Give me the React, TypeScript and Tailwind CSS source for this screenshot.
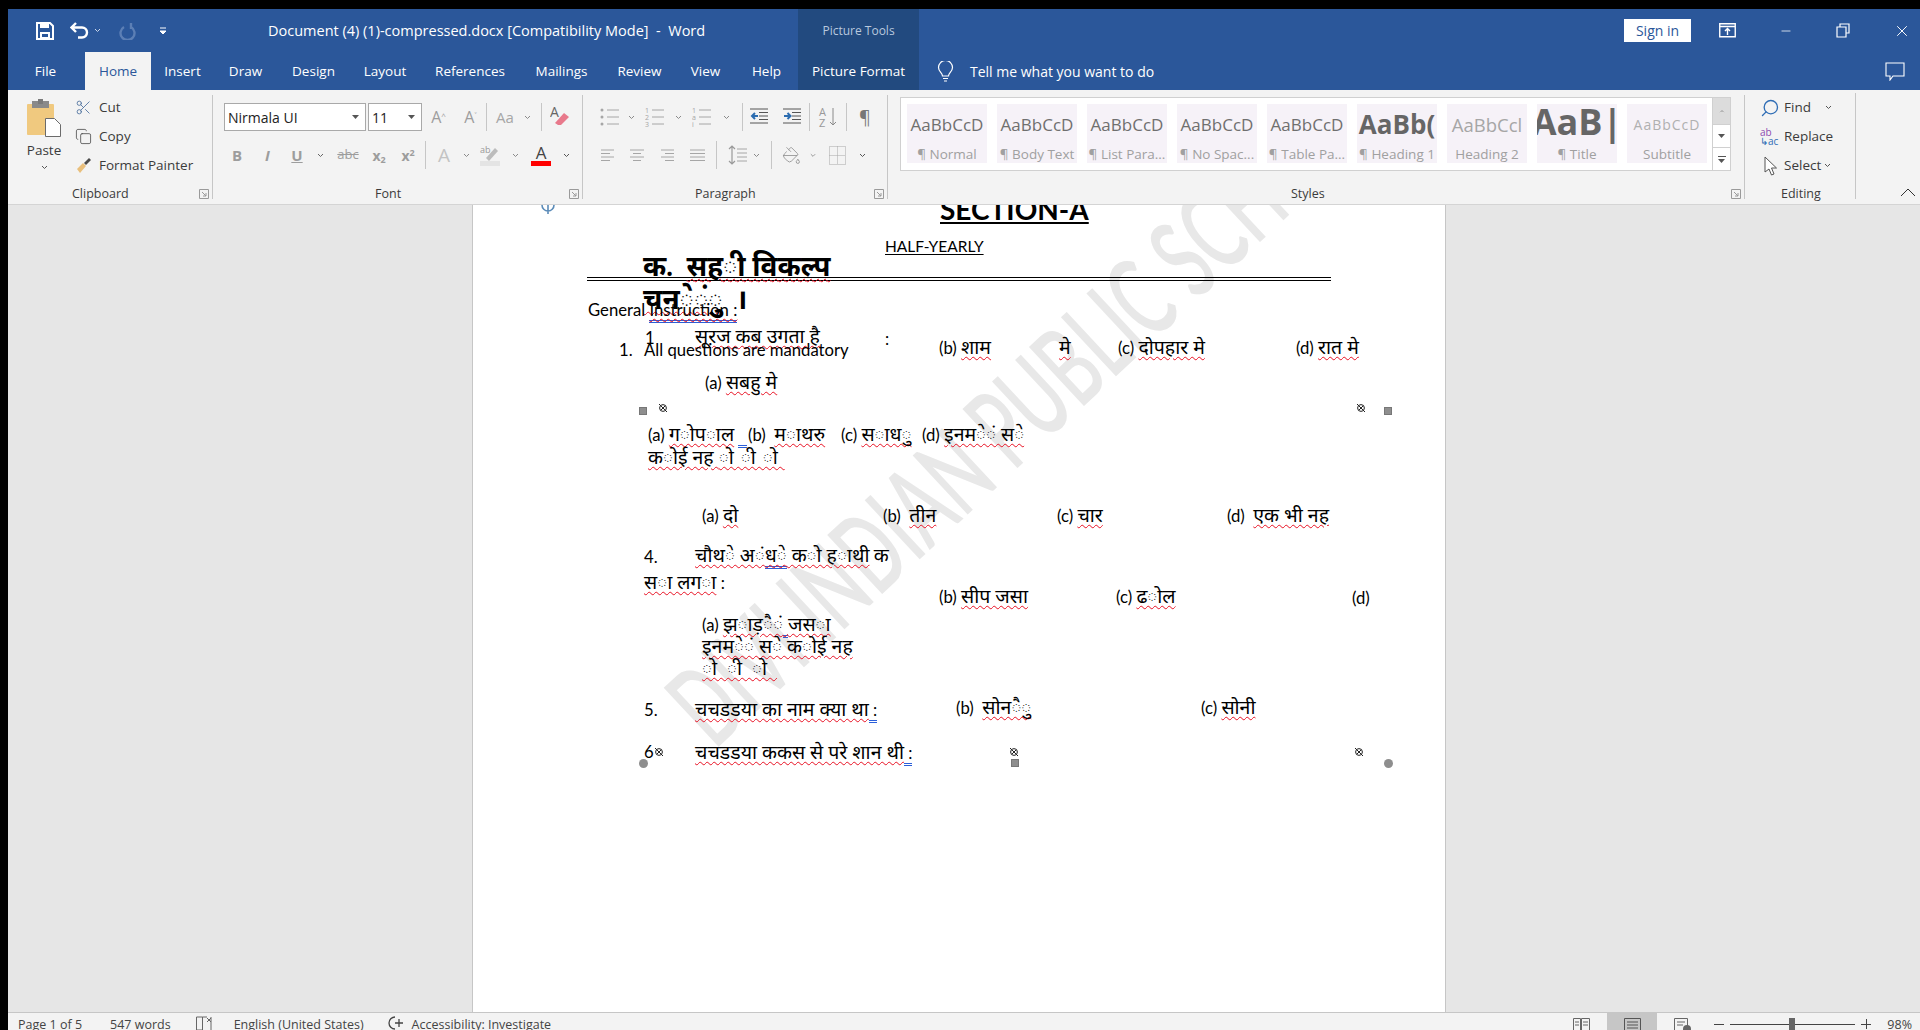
import React from "react";
import { Scissors, Copy, Search, X, Minus, ChevronUp, PaintBucket } from "lucide-react";

const Chev = ({ c = "text-[#8a8a8a]" }: { c?: string }) => (
  <svg width="7" height="5" viewBox="0 0 7 5" className={c}><path d="M1 1l2.5 2.5L6 1" fill="none" stroke="currentColor" strokeWidth="1" /></svg>
);
const Tri = () => <svg width="7" height="4" viewBox="0 0 7 4"><path d="M0 0h7L3.5 4z" fill="#555" /></svg>;
const Launcher = () => (
  <svg width="10" height="10" viewBox="0 0 10 10" className="absolute right-[3px] bottom-0 text-[#9a9a9a]"><path d="M.5.5h9v9h-9z M3 3l4 4 M7 4v3H4" fill="none" stroke="currentColor" strokeWidth="1" /></svg>
);
const Cell = ({ w, children }: { w: string; children?: React.ReactNode }) => (
  <div className={`${w} h-[26px] flex items-center justify-center shrink-0`}>{children}</div>
);
const VSep = () => <div className="w-px h-[28px] bg-[#c6c6c6] shrink-0" />;

const Lines = ({ kind }: { kind: string }) => {
  const rows = [2, 5.5, 9, 12.5];
  const spans: Record<string, [number, number][]> = {
    left: [[0, 13], [0, 9], [0, 13], [0, 9]],
    center: [[0, 14], [3, 11], [0, 14], [3, 11]],
    right: [[0, 13], [4, 13], [0, 13], [4, 13]],
    just: [[0, 15], [0, 15], [0, 15], [0, 15]],
  };
  return (
    <svg width="15" height="15" viewBox="0 0 15 15">
      {rows.map((y, i) => <line key={i} x1={spans[kind][i][0]} x2={spans[kind][i][1]} y1={y} y2={y} stroke="#a6a6a6" strokeWidth="1" />)}
    </svg>
  );
};
const ListIcon = ({ label }: { label: string[] }) => (
  <svg width="20" height="20" viewBox="0 0 20 20">
    {[3, 10, 17].map((y, i) => (
      <g key={y}>
        {label[i] === "." ? <circle cx="2" cy={y} r="1.5" fill="#a6a6a6" /> : <text x="0" y={y + 3} fontSize="7" fill="#a6a6a6">{label[i]}</text>}
        <line x1="7" x2="19" y1={y} y2={y} stroke="#a6a6a6" />
      </g>
    ))}
  </svg>
);
const Indent = ({ flip }: { flip?: boolean }) => (
  <svg width="19" height="18" viewBox="0 0 19 18">
    {[1, 4.5, 8, 11.5, 15].map(y => <line key={y} x1={y === 1 || y === 15 ? 0 : 9} x2="18" y1={y} y2={y} stroke="#555" />)}
    <path d={flip ? "M1 8h6M4.5 5l3 3-3 3" : "M8 8H2M5 5L2 8l3 3"} fill="none" stroke="#2b6cb0" strokeWidth="2" />
  </svg>
);
const Anchor = ({ c }: { c: string }) => (
  <svg width="10" height="10" viewBox="0 0 10 10" className={`absolute ${c}`}>
    <circle cx="5" cy="5" r="3.4" fill="none" stroke="#222" strokeWidth="1" />
    <path d="M1 1l8 8M3 7l4-4" stroke="#222" strokeWidth="1" />
  </svg>
);

const StyleItem = ({ preview, label, p = "text-[17px] text-[#6f6f6f]" }: { preview: string; label: string; p?: string }) => (
  <div className="w-[80px] h-[59px] bg-[#f6f2f8] overflow-hidden shrink-0 flex flex-col items-center">
    <div className={`h-[41px] flex items-center justify-center whitespace-nowrap w-[80px] overflow-hidden ${p}`}>{preview}</div>
    <div className="text-[13.5px] text-[#a0a0a0] whitespace-nowrap leading-[18px]">{label}</div>
  </div>
);

const Tab = ({ w, children, c = "text-white" }: { w: string; children: React.ReactNode; c?: string }) => (
  <div className={`${w} h-[38px] flex items-center justify-center text-[13.5px] shrink-0 ${c}`}>{children}</div>
);

const W = ({ children }: { children: React.ReactNode }) => (
  <span className="text-[19.5px] underline decoration-wavy decoration-[#e81123] decoration-1 underline-offset-2">{children}</span>
);
const H = ({ children }: { children: React.ReactNode }) => (
  <span className="underline decoration-wavy decoration-[#e81123] decoration-1 underline-offset-2">{children}</span>
);
const B = ({ children }: { children: React.ReactNode }) => (
  <span className="border-b-[3px] border-double border-[#2b5fd9]">{children}</span>
);
const T = ({ c, children }: { c: string; children: React.ReactNode }) => (
  <div className={`absolute whitespace-pre leading-[24px] text-[16.7px] text-black ${c}`}>{children}</div>
);

export default function App() {
  return (
    <div className="w-[1920px] h-[1030px] bg-black pt-[9px] pl-[8px] overflow-hidden flex flex-col font-['Open_Sans','Noto_Sans',sans-serif]">
      {/* title row */}
      <div className="h-[43px] bg-[#2b579a] flex text-white shrink-0">
        <div className="w-[790px] flex items-center shrink-0">
          <svg width="18" height="18" viewBox="0 0 18 18" className="ml-[28px]">
            <path d="M1 1h13l3 3v13H1z" fill="none" stroke="#fff" strokeWidth="2" />
            <rect x="4" y="1" width="9" height="5" fill="#fff" /><rect x="4" y="10" width="10" height="7" fill="#fff" /><rect x="6" y="12" width="6" height="3" fill="#2b579a" />
          </svg>
          <svg width="19" height="17" viewBox="0 0 19 17" className="ml-[16px]"><path d="M6 1L1.5 5.5 6 10M2 5.5h10a5 5 0 0 1 0 10H8" fill="none" stroke="#fff" strokeWidth="2.4" /></svg>
          <span className="ml-[5px]"><Chev c="text-[#c9d6ea]" /></span>
          <svg width="17" height="18" viewBox="0 0 17 18" className="ml-[18px]"><path d="M12 1v6M12 5a7 7 0 1 1-7 0" fill="none" stroke="#5c7fb5" strokeWidth="2.4" /></svg>
          <svg width="6" height="8" viewBox="0 0 6 8" className="ml-[24px]"><path d="M0 1h6M0 4h6l-3 3z" stroke="#fff" fill="#fff" /></svg>
          <div className="ml-[102px] text-[14.5px] whitespace-pre">Document (4) (1)-compressed.docx [Compatibility Mode]  -  Word</div>
        </div>
        <div className="w-[121px] bg-[#224a7f] flex items-center justify-center text-[12px] text-[#b9c8de] shrink-0">Picture Tools</div>
        <div className="flex-1 flex items-center">
          <div className="ml-[705px] w-[67px] h-[23px] bg-white text-[#2b579a] text-[14px] flex items-center justify-center shrink-0">Sign in</div>
          <svg width="17" height="15" viewBox="0 0 17 15" className="ml-[28px]"><path d="M.75.75h15.5v13H.75zM1 3.5h15M8.5 12V6M6 8l2.5-2.5L11 8" fill="none" stroke="#fff" strokeWidth="1.4" /></svg>
          <Minus size={14} strokeWidth={1.3} className="ml-[43px]" />
          <svg width="14" height="15" viewBox="0 0 14 15" className="ml-[43px]"><path d="M1 4h9v10H1zM4 4V1h9v9h-3" fill="none" stroke="#fff" strokeWidth="1.2" /></svg>
          <X size={18} strokeWidth={1.3} className="ml-[43px]" />
        </div>
      </div>
      {/* tab row */}
      <div className="h-[38px] bg-[#2b579a] flex items-center shrink-0">
        <Tab w="w-[75px]">File</Tab>
        <div className="w-[2px]" />
        <Tab w="w-[66px]" c="bg-[#f3f3f3] text-[#2b579a]">Home</Tab>
        <Tab w="w-[63px]">Insert</Tab>
        <Tab w="w-[63px]">Draw</Tab>
        <Tab w="w-[73px]">Design</Tab>
        <Tab w="w-[70px]">Layout</Tab>
        <Tab w="w-[100px]">References</Tab>
        <Tab w="w-[83px]">Mailings</Tab>
        <Tab w="w-[73px]">Review</Tab>
        <Tab w="w-[59px]">View</Tab>
        <Tab w="w-[63px]">Help</Tab>
        <Tab w="w-[121px]" c="bg-[#224a7f] text-white">Picture Format</Tab>
        <svg width="17" height="21" viewBox="0 0 17 21" className="ml-[18px]"><path d="M5.5 15c0-3-4-4.500-4-8.500a7 7 0 0 1 14 0c0 4-4 5.500-4 8.500zM6 17.500h5M7 20h3" fill="none" stroke="#fff" strokeWidth="1.2" /></svg>
        <div className="ml-[16px] text-white text-[14px] whitespace-nowrap">Tell me what you want to do</div>
        <svg width="20" height="19" viewBox="0 0 20 19" className="ml-[731px]"><path d="M1 1h18v13H8l-3 4v-4H1z" fill="none" stroke="#fff" strokeWidth="1.1" /></svg>
      </div>
      {/* ribbon */}
      <div className="h-[115px] bg-[#f3f3f3] border-b border-[#d4d4d4] flex shrink-0 text-[13.5px] text-[#3b3b3b]">
        {/* Clipboard */}
        <div className="relative w-[205px] shrink-0 flex pt-[4px] my-[5px] border-r border-[#c6c6c6]">
          <div className="w-[60px] flex flex-col items-center pl-[12px]">
            <svg width="36" height="38" viewBox="0 0 36 38">
              <rect x="1" y="5" width="27" height="31" rx="1" fill="#f0c97f" />
              <rect x="6" y="2" width="17" height="7" fill="#8a8a8a" /><rect x="12" y="0" width="5" height="5" fill="#7a7a7a" />
              <path d="M19.5 19.5h9l6 6v12h-15z" fill="#fff" stroke="#6b6b6b" />
            </svg>
            <div className="mt-[4px] leading-[18px]">Paste</div>
            <div className="mt-[6px]"><Chev c="text-[#555]" /></div>
          </div>
          <div className="flex flex-col ml-[7px] -mt-[6px]">
            <div className="flex items-center h-[29px] gap-[7px]"><Scissors size={17} strokeWidth={1.2} className="text-[#4a6f9d]" />Cut</div>
            <div className="flex items-center h-[29px] gap-[7px]"><Copy size={17} strokeWidth={1.1} className="text-[#444]" />Copy</div>
            <div className="flex items-center h-[29px] gap-[7px]">
              <svg width="17" height="17" viewBox="0 0 17 17"><path d="M2 12l6-6 3 3-6 7z" fill="#e9bf7c" /><path d="M9 6l5-5 2 2-5 5z" fill="#4a4a4a" /></svg>
              <span className="whitespace-nowrap">Format Painter</span>
            </div>
          </div>
          <div className="absolute -bottom-[4px] left-[64px] text-[12.5px] leading-[18px]">Clipboard</div>
          <Launcher />
        </div>
        {/* Font */}
        <div className="relative w-[370px] shrink-0 my-[5px] border-r border-[#c6c6c6] pt-[8px] pl-[11px]">
          <div className="flex items-center h-[28px]">
            <div className="w-[142px] h-[28px] bg-white border border-[#a9a9a9] flex items-center justify-between px-[3px] pr-[6px] text-[14px] text-[#222] shrink-0">Nirmala UI<Tri /></div>
            <div className="ml-[2px] w-[54px] h-[28px] bg-white border border-[#a9a9a9] flex items-center justify-between px-[3px] pr-[6px] text-[14px] text-[#222] shrink-0">11<Tri /></div>
            <Cell w="w-[33px]"><span className="text-[16px] text-[#9d9d9d]">A<sup className="text-[8px]">^</sup></span></Cell>
            <Cell w="w-[31px]"><span className="text-[16px] text-[#9d9d9d]">A<sup className="text-[8px]">˅</sup></span></Cell>
            <VSep />
            <Cell w="w-[36px]"><span className="text-[15px] text-[#a6a6a6]">Aa</span></Cell>
            <Cell w="w-[8px]"><Chev /></Cell>
            <div className="ml-[10px]"><VSep /></div>
            <Cell w="w-[36px]">
              <svg width="20" height="22" viewBox="0 0 20 22"><path d="M5 17l9-10 5 4-8 8H8z" fill="#e8798b" /><text x="0" y="11" fontSize="14" fill="#666">A</text></svg>
            </Cell>
          </div>
          <div className="flex items-center h-[28px] mt-[10px] -ml-[2px]">
            <Cell w="w-[30px]"><b className="text-[15px] text-[#9d9d9d]">B</b></Cell>
            <Cell w="w-[31px]"><i className="text-[15px] font-bold text-[#9d9d9d]">I</i></Cell>
            <Cell w="w-[28px]"><b className="text-[15px] text-[#9d9d9d] underline">U</b></Cell>
            <Cell w="w-[18px]"><Chev c="text-[#666]" /></Cell>
            <Cell w="w-[38px]"><span className="text-[13px] text-[#9d9d9d] line-through">abc</span></Cell>
            <Cell w="w-[24px]"><b className="text-[14px] text-[#9d9d9d]">x<sub className="text-[9px]">2</sub></b></Cell>
            <Cell w="w-[34px]"><b className="text-[14px] text-[#9d9d9d]">x<sup className="text-[9px]">2</sup></b></Cell>
            <VSep />
            <Cell w="w-[36px]"><span className="text-[19px] text-[#c3c3c3]">A</span></Cell>
            <Cell w="w-[8px]"><Chev /></Cell>
            <Cell w="w-[40px]">
              <svg width="20" height="22" viewBox="0 0 20 22"><text x="0" y="9" fontSize="9" fill="#999">ab</text><path d="M6 14l9-10 3 3-9 10z" fill="#bcbcbc" /><rect x="0" y="17" width="20" height="5" fill="#e4e4e4" /></svg>
            </Cell>
            <Cell w="w-[10px]"><Chev /></Cell>
            <Cell w="w-[42px]">
              <div className="flex flex-col items-center"><span className="text-[17px] leading-[17px] text-[#444]">A</span><span className="w-[20px] h-[5px] bg-[#ff0000]" /></div>
            </Cell>
            <Cell w="w-[8px]"><Chev c="text-[#555]" /></Cell>
          </div>
          <div className="absolute -bottom-[4px] left-[162px] text-[12.5px] leading-[18px]">Font</div>
          <Launcher />
        </div>
        {/* Paragraph */}
        <div className="relative w-[305px] shrink-0 my-[5px] border-r border-[#c6c6c6] pt-[8px] pl-[15px]">
          <div className="flex items-center h-[28px]">
            <Cell w="w-[24px]"><ListIcon label={[".", ".", "."]} /></Cell>
            <Cell w="w-[19px]"><Chev /></Cell>
            <Cell w="w-[28px]"><ListIcon label={["1", "2", "3"]} /></Cell>
            <Cell w="w-[19px]"><Chev /></Cell>
            <Cell w="w-[28px]"><ListIcon label={["1", "a", "i"]} /></Cell>
            <Cell w="w-[20px]"><Chev /></Cell>
            <div className="ml-[6px]"><VSep /></div>
            <Cell w="w-[33px]"><Indent /></Cell>
            <Cell w="w-[33px]"><Indent flip /></Cell>
            <VSep />
            <Cell w="w-[36px]">
              <svg width="20" height="22" viewBox="0 0 20 22"><text x="1" y="10" fontSize="11" fill="#999">A</text><text x="1" y="21" fontSize="11" fill="#999">Z</text><path d="M15 2v17M12 16l3 3 3-3" fill="none" stroke="#8a8a8a" /></svg>
            </Cell>
            <VSep />
            <Cell w="w-[36px]"><span className="text-[18px] text-[#777]">¶</span></Cell>
          </div>
          <div className="flex items-center h-[28px] mt-[10px] -ml-[1px]">
            <Cell w="w-[22px]"><Lines kind="left" /></Cell>
            <Cell w="w-[36px]"><Lines kind="center" /></Cell>
            <Cell w="w-[26px]"><Lines kind="right" /></Cell>
            <Cell w="w-[32px]"><Lines kind="just" /></Cell>
            <Cell w="w-[3px]" />
            <VSep />
            <div className="ml-[6px]"><Cell w="w-[29px]">
              <svg width="19" height="20" viewBox="0 0 19 20"><path d="M4 1v18M1 4l3-3 3 3M1 16l3 3 3-3" fill="none" stroke="#9a9a9a" strokeWidth="1.2" /><path d="M9 4h10M9 8h10M9 12h10M9 16h10" stroke="#a6a6a6" /></svg>
            </Cell></div>
            <Cell w="w-[8px]"><Chev /></Cell>
            <Cell w="w-[11px]" />
            <VSep />
            <Cell w="w-[38px]"><PaintBucket size={19} strokeWidth={1} className="text-[#8a8a8a]" /></Cell>
            <Cell w="w-[6px]"><Chev /></Cell>
            <Cell w="w-[42px]">
              <svg width="17" height="19" viewBox="0 0 17 19"><path d="M.5.5h16v18H.5zM8.500.5v18M.5 9.500h16" fill="none" stroke="#a6a6a6" strokeDasharray="1 1" /></svg>
            </Cell>
            <Cell w="w-[8px]"><Chev c="text-[#555]" /></Cell>
          </div>
          <div className="absolute -bottom-[4px] left-[112px] text-[12.5px] leading-[18px]">Paragraph</div>
          <Launcher />
        </div>
        {/* Styles */}
        <div className="relative w-[857px] shrink-0 my-[5px] border-r border-[#c6c6c6] pt-[2px] pl-[12px]">
          <div className="w-[831px] h-[74px] bg-white border border-[#d0d0d0] flex">
            <div className="flex-1 flex gap-[10px] pl-[6px] pt-[6px]">
              <StyleItem preview="AaBbCcD" label="¶ Normal" />
              <StyleItem preview="AaBbCcD" label="¶ Body Text" />
              <StyleItem preview="AaBbCcD" label="¶ List Para..." />
              <StyleItem preview="AaBbCcD" label="¶ No Spac..." />
              <StyleItem preview="AaBbCcD" label="¶ Table Pa..." />
              <StyleItem preview="AaBb(" label="¶ Heading 1" p="text-[26px] font-bold text-[#666]" />
              <StyleItem preview="AaBbCcl" label="Heading 2" p="text-[18.5px] text-[#a6a6a6]" />
              <StyleItem preview="AaB|" label="¶ Title" p="text-[36px] font-bold text-[#666] pb-[6px]" />
              <StyleItem preview="AaBbCcD" label="Subtitle" p="text-[14px] tracking-[1px] text-[#b0b0b0]" />
            </div>
            <div className="w-[18px] border-l border-[#d0d0d0] flex flex-col shrink-0">
              <div className="h-[26px] bg-[#dcdcdc] flex items-center justify-center"><ChevronUp size={8} className="text-[#b5b5b5]" fill="#b5b5b5" /></div>
              <div className="h-[24px] border-y border-[#d0d0d0] flex items-center justify-center"><Tri /></div>
              <div className="flex-1 flex flex-col items-center justify-center gap-[2px]"><span className="w-[8px] h-px bg-[#555]" /><Tri /></div>
            </div>
          </div>
          <div className="absolute -bottom-[4px] left-[403px] text-[12.5px] leading-[18px]">Styles</div>
          <Launcher />
        </div>
        {/* Editing */}
        <div className="relative w-[111px] shrink-0 mt-[3px] mb-[5px] border-r border-[#c6c6c6] pl-[15px]">
          <div className="flex items-center h-[29px]">
            <Search size={20} strokeWidth={1.6} className="text-[#2f6db5] w-[20px] -scale-x-100" /><span className="ml-[4px]">Find</span><span className="ml-[14px]"><Chev c="text-[#555]" /></span>
          </div>
          <div className="flex items-center h-[29px]">
            <div className="w-[20px] text-[10px] leading-[9px] text-[#2f6db5]"><span className="text-[#8e4bb0]">ab</span><br />↳ac</div><span className="ml-[4px]">Replace</span>
          </div>
          <div className="flex items-center h-[29px]">
            <svg width="20" height="20" viewBox="0 0 20 20"><path d="M5 1v15l4-3 2.500 6 2.500-1-2.500-6h5z" fill="#fff" stroke="#555" /></svg><span className="ml-[4px]">Select</span><span className="ml-[3px]"><Chev c="text-[#555]" /></span>
          </div>
          <div className="absolute -bottom-[4px] left-[36px] text-[12.5px] leading-[18px]">Editing</div>
        </div>
        <div className="relative flex-1"><svg width="16" height="9" viewBox="0 0 16 9" className="absolute bottom-[7px] right-[4px]"><path d="M1 8l7-7 7 7" fill="none" stroke="#333" strokeWidth="1" /></svg></div>
      </div>
      {/* document */}
      <div className="flex-1 min-h-0 bg-[#e6e6e6] flex pl-[464px] overflow-hidden">
        <div className="relative w-[974px] h-full bg-white border-x border-[#c6c6c6] overflow-hidden font-['Lato','Noto_Sans_Devanagari','Noto_Sans',sans-serif]">
          <div className="absolute -left-[46px] top-[271px] w-[920px] whitespace-nowrap font-semibold text-[112px] leading-[110px] text-[#e8e8e8] -rotate-[43deg] scale-x-[0.6]">DIVI INDIAN PUBLIC SCHOOL</div>
          <svg width="14" height="10" viewBox="0 0 14 10" className="absolute left-[68px] top-0"><path d="M1 0a6 6 0 0 0 12 0M7 0v9" fill="none" stroke="#5b8bb8" strokeWidth="1.6" /></svg>
          <div className="absolute left-[467px] -top-[12px] font-bold text-[28px] leading-[33px] underline underline-offset-2 whitespace-nowrap">SECTION-A</div>
          <div className="absolute left-[412px] top-[30px] text-[15.5px] leading-[22px] underline underline-offset-2 whitespace-nowrap">HALF-YEARLY</div>
          <div className="absolute left-[114px] top-[72px] w-[744px] h-[4px] border-y border-black" />
          <div className="absolute left-[170px] top-[42px] font-bold text-[28px] leading-[36px] whitespace-pre">क.  <H>सह◌ी विकल्प</H></div>
          <div className="absolute left-[170px] top-[75px] font-bold text-[28px] leading-[36px] whitespace-pre"><H>चन◌े◌ं◌ु</H>  <span className="tracking-[4px]">।</span></div>
          <T c="left-[115px] top-[93px]">General <H><B>Instruction :</B></H></T>
          <T c="left-[172px] top-[121px]">1</T>
          <T c="left-[222px] top-[119px]"><W>सूरज कब उगता है</W></T>
          <T c="left-[412px] top-[122px]">:</T>
          <T c="left-[146px] top-[133px]">1.</T>
          <T c="left-[171px] top-[133px]">All questions are mandatory</T>
          <T c="left-[466px] top-[130px]">(b) <W>शाम</W></T>
          <T c="left-[586px] top-[130px]"><W>मे</W></T>
          <T c="left-[645px] top-[130px]">(c) <W>दोपहार मे</W></T>
          <T c="left-[823px] top-[130px]">(d) <W>रात मे</W></T>
          <T c="left-[232px] top-[165px]">(a) <W>सबहु मे</W></T>
          <div className="absolute left-[166px] top-[202px] w-[8px] h-[8px] bg-[#8e8e8e] border border-[#777]" />
          <Anchor c="left-[185px] top-[198px]" />
          <Anchor c="left-[883px] top-[198px]" />
          <div className="absolute left-[911px] top-[202px] w-[8px] h-[8px] bg-[#8e8e8e] border border-[#777]" />
          <T c="left-[175px] top-[217px]">(a) <W>ग◌ोप◌ाल</W> <B>  </B></T>
          <T c="left-[275px] top-[217px]">(b)  <W>म◌ाथरु</W></T>
          <T c="left-[368px] top-[217px]">(c) <W>स◌ाध◌ु</W></T>
          <T c="left-[449px] top-[217px]">(d) <W>इनम◌े◌ं स◌े</W></T>
          <T c="left-[175px] top-[240px]"><W>क◌ोई नह <span className="tracking-[7px]">◌ो◌ी◌ो</span></W></T>
          <T c="left-[229px] top-[298px]">(a) <W>दो</W></T>
          <T c="left-[410px] top-[298px]">(b)  <W>तीन</W></T>
          <T c="left-[584px] top-[298px]">(c) <W>चार</W></T>
          <T c="left-[754px] top-[298px]">(d)  <W>एक भी नह</W></T>
          <T c="left-[171px] top-[340px]">4.</T>
          <T c="left-[222px] top-[338px]"><W>चौथ◌े अ◌ं<B>ध◌े</B> क◌ो ह◌ाथी</W> <span className="text-[19.5px]">क</span></T>
          <T c="left-[171px] top-[365px]"><W>स◌ा लग◌ा</W> :</T>
          <T c="left-[466px] top-[379px]">(b) <W>सीप जसा</W></T>
          <T c="left-[643px] top-[379px]">(c) <W>ढ◌ोल</W></T>
          <T c="left-[879px] top-[381px]">(d)</T>
          <T c="left-[229px] top-[407px]">(a) <W>झ◌ाड़◌ै◌ं<B> </B>जस◌ा</W></T>
          <T c="left-[229px] top-[429px]"><W>इनम◌े◌ं स◌े क◌ोई नह</W></T>
          <T c="left-[229px] top-[451px]"><W><span className="tracking-[10px]">◌ो◌ी◌ो</span></W></T>
          <T c="left-[171px] top-[493px]">5.</T>
          <T c="left-[222px] top-[492px]"><W>चचडडया का नाम क्या था</W><B> :</B></T>
          <T c="left-[483px] top-[490px]">(b)  <W>सोन◌ै◌ु</W></T>
          <T c="left-[728px] top-[490px]">(c) <W>सोनी</W></T>
          <T c="left-[171px] top-[535px]">6</T>
          <T c="left-[222px] top-[535px]"><W>चचडडया ककस से परे शान थी</W><B> :</B></T>
          <Anchor c="left-[181px] top-[542px]" />
          <Anchor c="left-[536px] top-[542px]" />
          <Anchor c="left-[881px] top-[542px]" />
          <div className="absolute left-[166px] top-[554px] w-[9px] h-[9px] rounded-full bg-[#8e8e8e]" />
          <div className="absolute left-[538px] top-[554px] w-[8px] h-[8px] bg-[#8e8e8e] border border-[#777]" />
          <div className="absolute left-[911px] top-[554px] w-[9px] h-[9px] rounded-full bg-[#8e8e8e]" />
        </div>
      </div>
      {/* status */}
      <div className="h-[18px] bg-[#f3f3f3] border-t border-[#c6c6c6] flex text-[12.5px] text-[#444] shrink-0 overflow-hidden">
        <div className="flex items-start pt-[3px] pl-[10px] whitespace-nowrap leading-[18px]">
          <span>Page 1 of 5</span>
          <span className="ml-[28px]">547 words</span>
          <svg width="17" height="14" viewBox="0 0 17 14" className="ml-[25px]"><path d="M.5 1h6v13h-6zM6.5 1H11M15 1v13M11 2l4 4M15 2l-4 4" fill="none" stroke="#666" /></svg>
          <span className="ml-[21px]">English (United States)</span>
          <svg width="16" height="14" viewBox="0 0 16 14" className="ml-[24px]"><path d="M7 1a6 6 0 0 0 0 12M11 3v8M7 7h8" fill="none" stroke="#444" strokeWidth="1.3" /></svg>
          <span className="ml-[8px]">Accessibility: Investigate</span>
        </div>
        <div className="ml-auto flex items-start">
          <svg width="17" height="14" viewBox="0 0 17 14" className="mt-[5px]"><path d="M.5.5h7v14h-7zM8.500.5h8v14h-8zM2 4h4M2 7h4M10 4h5M10 7h5" fill="none" stroke="#666" /></svg>
          <div className="ml-[17px] w-[50px] h-[18px] bg-[#c6c6c6] flex justify-center pt-[5px]">
            <svg width="17" height="14" viewBox="0 0 17 14"><path d="M.5.5h16v14H.5zM3 4h11M3 7h11M3 10h11" fill="none" stroke="#555" /></svg>
          </div>
          <svg width="17" height="14" viewBox="0 0 17 14" className="ml-[17px] mt-[5px]"><path d="M.5.5h13v14H.5zM3 4h8M3 7h6" fill="none" stroke="#666" /><circle cx="13" cy="11" r="4" fill="#666" /></svg>
          <div className="ml-[23px] mt-[11px] w-[10px] h-px bg-[#444]" />
          <div className="relative ml-[6px] mt-[11px] w-[125px] h-px bg-[#444]"><div className="absolute left-[59px] -top-[6px] w-[6px] h-[12px] bg-[#666]" /></div>
          <div className="ml-[6px] mt-[6px] text-[#444] relative w-[10px] h-[10px]"><div className="absolute top-[5px] w-[10px] h-px bg-[#444]" /><div className="absolute left-[5px] w-px h-[10px] bg-[#444]" /></div>
          <span className="ml-[16px] mr-[8px] mt-[3px] leading-[18px] whitespace-nowrap">98%</span>
        </div>
      </div>
    </div>
  );
}
